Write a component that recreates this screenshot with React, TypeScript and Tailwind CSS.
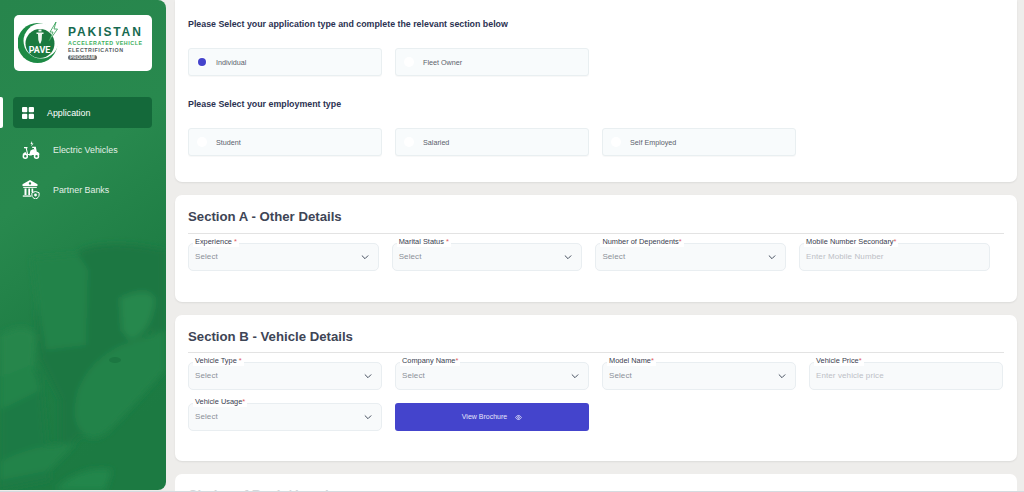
import React from "react";

const Chevron = () => (
  <svg width="10" height="10" viewBox="0 0 24 24" fill="none" stroke="#374151" strokeWidth="2.200" strokeLinecap="round" strokeLinejoin="round">
    <path d="M5 9l7 7 7-7" />
  </svg>
);

function Radio({ label, checked }: { label: string; checked?: boolean }) {
  return (
    <div className="flex h-[28px] w-[194px] items-center rounded-[3px] border border-[#e9eff1] bg-[#f8fbfc] pl-[8px] shadow-[0_1px_1px_rgba(0,0,0,0.03)]">
      <span className="flex h-[10px] w-[10px] items-center justify-center rounded-full bg-white">
        {checked && <span className="h-[8px] w-[8px] rounded-full bg-[#4444cc]" />}
      </span>
      <span className="ml-[9px] mt-[2px] text-[7.200px] text-[#5b616b]">{label}</span>
    </div>
  );
}

function Field({ label, star, placeholder, select, width }: { label: string; star: string; placeholder: string; select?: boolean; width: string }) {
  return (
    <div className={`relative flex h-[28px] items-center justify-between rounded-[5px] border border-[#e9eef1] bg-[#f8fafb] pl-[6px] pr-[8px] ${width}`}>
      <span className="absolute left-[4px] top-[-7px] bg-white px-[2px] text-[7.400px] leading-[10px] text-[#39404f]">
        {label}
        <span className="text-[#e05a5a]">{star}</span>
      </span>
      <span className={`text-[8px] tracking-[0.100px] ${select ? "text-[#8b9098]" : "text-[#bcc0c6]"}`}>{placeholder}</span>
      {select && <Chevron />}
    </div>
  );
}

function Logo() {
  return (
    <div className="flex h-[56px] w-[138px] items-center rounded-[5px] bg-white pl-[4px]">
      <svg width="40" height="44" viewBox="0 0 40 44" className="shrink-0">
        <circle cx="19.500" cy="22" r="20" fill="#1d8a45" />
        <circle cx="23" cy="20" r="17.500" fill="#fff" />
        <circle cx="22" cy="22.500" r="14.500" fill="#1b7a3f" />
        <path d="M18.500 11.500h7v1.500h-1.500l-.3 6-1.200 3.500h-1l-1.200-3.500-.3-6h-1.500z" fill="#eef6f0" />
        <path d="M20.500 8.500h3v2h-3z" fill="#eef6f0" />
        <path d="M38 1l-6 10h3l-4 9 8.500-12h-3.500z" fill="#fff" stroke="#2c9a4f" strokeWidth="0.800" />
        <text x="21.500" y="31.500" textAnchor="middle" fontFamily="Roboto, sans-serif" fontSize="9" fontWeight="700" fill="#fff">PAVE</text>
      </svg>
      <div className="ml-[10px] flex flex-col items-start">
        <span className="text-[12px] leading-[13px] font-bold tracking-[1.900px] text-[#176a50]">PAKISTAN</span>
        <span className="mt-[1px] text-[5.300px] leading-[7px] font-bold tracking-[0.550px] text-[#3aae5b]">ACCELERATED VEHICLE</span>
        <span className="text-[5.300px] leading-[7px] font-bold tracking-[0.550px] text-[#555b5e]">ELECTRIFICATION</span>
        <span className="mt-[1px] rounded-full bg-[#6b6f70] px-[2px] text-[4.500px] leading-[5px] font-bold tracking-[0.200px] text-[#eee]">PROGRAM</span>
      </div>
    </div>
  );
}

function SidebarArt() {
  return (
    <svg className="absolute inset-0 h-full w-full" viewBox="0 0 166 490" preserveAspectRatio="none">
      <defs>
        <linearGradient id="base" x1="0" y1="0" x2="0.25" y2="1">
          <stop offset="0" stopColor="#27854c" />
          <stop offset="0.42" stopColor="#28894e" />
          <stop offset="0.7" stopColor="#1f7e45" />
          <stop offset="1" stopColor="#1c7a42" />
        </linearGradient>
        <filter id="soft"><feGaussianBlur stdDeviation="3" /></filter>
      </defs>
      <rect width="166" height="490" fill="url(#base)" />
      <g filter="url(#soft)">
        <path d="M80 250Q110 238 165 250V345L150 330Q130 370 110 400L90 430L60 450V400L40 360L36 310L58 300Z" fill="#1c7742" />
        <path d="M32 258L78 254L88 270L86 345L46 350L38 310Z" fill="#22834a" />
        <path d="M0 335Q25 320 36 335L34 372L0 395Z" fill="#25864c" />
        <path d="M0 395L40 370L50 480L0 490Z" fill="#1e7a44" />
        <path d="M120 298Q150 285 155 300Q150 335 130 340L122 330Z" fill="#27884e" />
        <path d="M122 345Q140 340 165 330V370Q130 410 110 430Q92 445 82 432Q70 420 78 390Q90 360 122 345Z" fill="#23834a" />
        <path d="M0 462Q30 445 76 443L50 470L0 480Z" fill="#22834a" />
        <path d="M60 485Q85 465 112 470L105 490H55Z" fill="#24864b" />
        <path d="M0 378L32 365L40 390L0 410Z" fill="#23844a" />
      </g>
      <ellipse cx="115" cy="360" rx="6" ry="3" fill="#1c7742" />
    </svg>
  );
}

function ScooterIcon() {
  return (
    <svg width="18" height="18" viewBox="0 0 18 18" fill="#fff" className="shrink-0">
      <path d="M10 0L8.500 3h1.300L9 5.500 11.500 2.400h-1.300z" />
      <path d="M2 6h3.500v1.200H4.800l1.300 5.800h3.200c.3-1.700 1.300-3 3-3.600l-.4-2.400h-1.700V5.800h3.600l1 5c1.300.3 2.300 1.200 2.800 2.400l-.6.800H5.300L3.700 7.200H2z" />
      <path d="M8.500 9.500l3-1.500 2 3-4 3.500H7z" />
      <path d="M1 12.700c.5-.9 1.500-1.500 3-1.500l.8 2.800H.7z" />
      <circle cx="3.300" cy="15.200" r="2" fill="none" stroke="#fff" strokeWidth="1.500" />
      <circle cx="14.500" cy="15.200" r="2" fill="none" stroke="#fff" strokeWidth="1.500" />
    </svg>
  );
}

function BankIcon() {
  return (
    <svg width="18" height="19" viewBox="0 0 18 19" fill="#fff" className="shrink-0">
      <path fillRule="evenodd" d="M8 0L15.500 4.200V6H.5V4.200zM8 2.200a1.200 1.200 0 100 2.400 1.200 1.200 0 000-2.400z" />
      <rect x="1.200" y="6.800" width="13.600" height="1.100" />
      <rect x="2.500" y="8.500" width="2" height="6.500" />
      <rect x="6.300" y="8.500" width="1.700" height="6.500" />
      <rect x="9.500" y="8.500" width="1.700" height="3.500" />
      <rect x=".8" y="15.400" width="8.500" height="1.300" />
      <path d="M13.500 11.500l3.600 1.200v2.400c0 1.900-1.600 3.200-3.600 3.800-2-.6-3.600-1.900-3.600-3.800v-2.400z" fill="none" stroke="#fff" strokeWidth="1" />
      <circle cx="13.500" cy="15" r="1.400" />
    </svg>
  );
}

export default function App() {
  return (
    <div className="flex h-[492px] w-[1024px] overflow-hidden border-b border-[#d5dbe0] bg-[#eeedeb] font-['Liberation_Sans',sans-serif]">
      <aside className="relative h-[490px] w-[166px] shrink-0 overflow-hidden rounded-r-[8px]">
        <SidebarArt />
        <span className="absolute left-0 top-[97px] h-[31px] w-[3px] rounded-r-[2px] bg-white" />
        <div className="relative flex flex-col pl-[14px] pt-[15px]">
          <Logo />
          <nav className="mt-[26px] flex flex-col text-[8.900px]">
            <div className="-ml-[1px] flex h-[31px] w-[139px] items-center rounded-[4px] bg-[#14693a] pl-[9px] text-white">
              <svg width="12" height="12" viewBox="0 0 12 12" fill="#fff" className="shrink-0">
                <rect width="5.300" height="5.300" rx="1" />
                <rect x="6.700" width="5.300" height="5.300" rx="1" />
                <rect y="6.700" width="5.300" height="5.300" rx="1" />
                <rect x="6.700" y="6.700" width="5.300" height="5.300" rx="1" />
              </svg>
              <span className="ml-[13px] mt-[2px]">Application</span>
            </div>
            <div className="mt-[12px] flex h-[19px] items-center pl-[8px] text-[#e3efe7]">
              <ScooterIcon />
              <span className="ml-[13px] mt-[2px]">Electric Vehicles</span>
            </div>
            <div className="mt-[21px] flex h-[19px] items-center pl-[8px] text-[#e3efe7]">
              <BankIcon />
              <span className="ml-[13px] mt-[2px]">Partner Banks</span>
            </div>
          </nav>
        </div>
      </aside>

      <main className="ml-[9px] flex w-[842px] shrink-0 flex-col gap-[13px]">
        <section className="h-[182px] shrink-0 rounded-b-[7px] bg-white px-[13px] pt-[19px] shadow-[0_1px_2px_rgba(0,0,0,0.08)]">
          <h3 className="text-[8.830px] leading-[11px] font-bold text-[#2b3252]">Please Select your application type and complete the relevant section below</h3>
          <div className="mt-[18px] flex gap-[13px]">
            <Radio label="Individual" checked />
            <Radio label="Fleet Owner" />
          </div>
          <h3 className="mt-[23px] text-[8.830px] leading-[11px] font-bold text-[#2b3252]">Please Select your employment type</h3>
          <div className="mt-[18px] flex gap-[13px]">
            <Radio label="Student" />
            <Radio label="Salaried" />
            <Radio label="Self Employed" />
          </div>
        </section>

        <section className="h-[107px] shrink-0 rounded-[7px] bg-white px-[13px] pt-[13px] shadow-[0_1px_2px_rgba(0,0,0,0.08)]">
          <h2 className="border-b border-[#e3e3e3] pb-[8px] text-[13.200px] leading-[17px] font-bold text-[#3e4556]">Section A - Other Details</h2>
          <div className="mt-[9px] flex gap-[13px]">
            <Field width="w-[190.700px]" label="Experience " star="*" placeholder="Select" select />
            <Field width="w-[190.700px]" label="Marital Status " star="*" placeholder="Select" select />
            <Field width="w-[190.700px]" label="Number of Dependents" star="*" placeholder="Select" select />
            <Field width="w-[190.700px]" label="Mobile Number Secondary" star="*" placeholder="Enter Mobile Number" />
          </div>
        </section>

        <section className="h-[146px] shrink-0 rounded-[7px] bg-white px-[13px] pt-[13px] shadow-[0_1px_2px_rgba(0,0,0,0.08)]">
          <h2 className="border-b border-[#e3e3e3] pb-[7px] text-[13.200px] leading-[17px] font-bold text-[#3e4556]">Section B - Vehicle Details</h2>
          <div className="mt-[9px] grid grid-cols-[194px_194px_194px_194px] gap-x-[13px] gap-y-[13px]">
            <Field width="w-[194px]" label="Vehicle Type " star="*" placeholder="Select" select />
            <Field width="w-[194px]" label="Company Name" star="*" placeholder="Select" select />
            <Field width="w-[194px]" label="Model Name" star="*" placeholder="Select" select />
            <Field width="w-[194px]" label="Vehicle Price" star="*" placeholder="Enter vehicle price" />
            <Field width="w-[194px]" label="Vehicle Usage" star="*" placeholder="Select" select />
            <button className="flex h-[28px] w-[194px] items-center justify-center gap-[8px] rounded-[3px] bg-[#4444cc] text-[7px] text-[#e6e6fa]">
              View Brochure
              <svg width="7" height="7" viewBox="0 0 24 24" fill="none" stroke="#e6e6fa" strokeWidth="3">
                <path d="M2 12s4-7 10-7 10 7 10 7-4 7-10 7-10-7-10-7z" />
                <circle cx="12" cy="12" r="3" />
              </svg>
            </button>
          </div>
        </section>

        <section className="h-[40px] shrink-0 rounded-t-[7px] bg-white px-[13px] pt-[12px]">
          <h2 className="text-[13.200px] leading-[17px] font-bold text-[#d6d7da]">Choice of Bank / Leasing</h2>
        </section>
      </main>
    </div>
  );
}
